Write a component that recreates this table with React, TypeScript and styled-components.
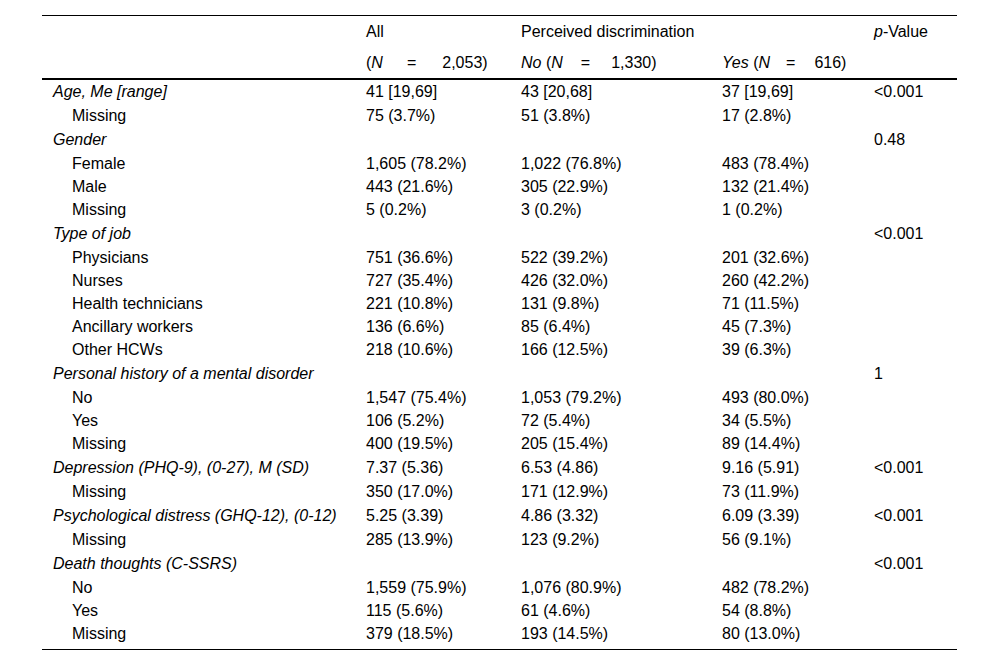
import React from "react";
import styled, { createGlobalStyle } from "styled-components";

const Global = createGlobalStyle`
  html, body { margin: 0; padding: 0; background: #fff; }
  body { font-family: "Liberation Sans", Arial, sans-serif; color: #000; }
`;

const Frame = styled.div`
  margin: 15px 0 0 42px;
  width: 915px;
  border-top: 1px solid #000;
  border-bottom: 1px solid #000;
  padding-bottom: 4px;
`;

const Table = styled.table`
  width: 100%;
  border-collapse: collapse;
  table-layout: fixed;
  font-size: 16px;
`;

const HeadRow = styled.tr<{ $last?: boolean }>`
  height: 31px;
  ${(p) => (p.$last ? "border-bottom: 2px solid #000;" : "")}
`;

const Th = styled.th`
  font-weight: normal;
  text-align: left;
  padding: 0 0 0 11px;
  line-height: 31px;
  white-space: nowrap;
  vertical-align: middle;
`;

const Row = styled.tr<{ $group?: boolean }>`
  height: ${(p) => (p.$group ? 25 : 23)}px;
`;

const Td = styled.td<{ $indent?: boolean; $italic?: boolean }>`
  padding: 0 0 0 ${(p) => (p.$indent ? 30 : 11)}px;
  font-style: ${(p) => (p.$italic ? "italic" : "normal")};
  white-space: nowrap;
  vertical-align: middle;
  line-height: 18px;
`;

const I = styled.i`
  font-style: italic;
`;

const Eq = styled.span<{ $l: number; $r: number }>`
  display: inline-block;
  padding: 0 ${(p) => p.$r}px 0 ${(p) => p.$l}px;
`;

type R = { label: string; group?: boolean; vals: string[]; p?: string };

const rows: R[] = [
  { label: "Age, Me [range]", group: true, vals: ["41 [19,69]", "43 [20,68]", "37 [19,69]"], p: "<0.001" },
  { label: "Missing", vals: ["75 (3.7%)", "51 (3.8%)", "17 (2.8%)"] },
  { label: "Gender", group: true, vals: ["", "", ""], p: "0.48" },
  { label: "Female", vals: ["1,605 (78.2%)", "1,022 (76.8%)", "483 (78.4%)"] },
  { label: "Male", vals: ["443 (21.6%)", "305 (22.9%)", "132 (21.4%)"] },
  { label: "Missing", vals: ["5 (0.2%)", "3 (0.2%)", "1 (0.2%)"] },
  { label: "Type of job", group: true, vals: ["", "", ""], p: "<0.001" },
  { label: "Physicians", vals: ["751 (36.6%)", "522 (39.2%)", "201 (32.6%)"] },
  { label: "Nurses", vals: ["727 (35.4%)", "426 (32.0%)", "260 (42.2%)"] },
  { label: "Health technicians", vals: ["221 (10.8%)", "131 (9.8%)", "71 (11.5%)"] },
  { label: "Ancillary workers", vals: ["136 (6.6%)", "85 (6.4%)", "45 (7.3%)"] },
  { label: "Other HCWs", vals: ["218 (10.6%)", "166 (12.5%)", "39 (6.3%)"] },
  { label: "Personal history of a mental disorder", group: true, vals: ["", "", ""], p: "1" },
  { label: "No", vals: ["1,547 (75.4%)", "1,053 (79.2%)", "493 (80.0%)"] },
  { label: "Yes", vals: ["106 (5.2%)", "72 (5.4%)", "34 (5.5%)"] },
  { label: "Missing", vals: ["400 (19.5%)", "205 (15.4%)", "89 (14.4%)"] },
  { label: "Depression (PHQ-9), (0-27), M (SD)", group: true, vals: ["7.37 (5.36)", "6.53 (4.86)", "9.16 (5.91)"], p: "<0.001" },
  { label: "Missing", vals: ["350 (17.0%)", "171 (12.9%)", "73 (11.9%)"] },
  { label: "Psychological distress (GHQ-12), (0-12)", group: true, vals: ["5.25 (3.39)", "4.86 (3.32)", "6.09 (3.39)"], p: "<0.001" },
  { label: "Missing", vals: ["285 (13.9%)", "123 (9.2%)", "56 (9.1%)"] },
  { label: "Death thoughts (C-SSRS)", group: true, vals: ["", "", ""], p: "<0.001" },
  { label: "No", vals: ["1,559 (75.9%)", "1,076 (80.9%)", "482 (78.2%)"] },
  { label: "Yes", vals: ["115 (5.6%)", "61 (4.6%)", "54 (8.8%)"] },
  { label: "Missing", vals: ["379 (18.5%)", "193 (14.5%)", "80 (13.0%)"] },
];

export default function App() {
  return (
    <>
      <Global />
      <Frame>
        <Table>
          <colgroup>
            <col style={{ width: 313 }} />
            <col style={{ width: 155 }} />
            <col style={{ width: 201 }} />
            <col style={{ width: 152 }} />
            <col style={{ width: 94 }} />
          </colgroup>
          <thead>
            <HeadRow>
              <Th />
              <Th>All</Th>
              <Th colSpan={2}>Perceived discrimination</Th>
              <Th>
                <I>p</I>-Value
              </Th>
            </HeadRow>
            <HeadRow $last>
              <Th />
              <Th>
                (<I>N</I>
                <Eq $l={24} $r={26}>=</Eq>2,053)
              </Th>
              <Th>
                <I>No</I> (<I>N</I>
                <Eq $l={18} $r={21}>=</Eq>1,330)
              </Th>
              <Th>
                <I>Yes</I> (<I>N</I>
                <Eq $l={16} $r={19}>=</Eq>616)
              </Th>
              <Th />
            </HeadRow>
          </thead>
          <tbody>
            {rows.map((r, i) => (
              <Row key={i} $group={r.group}>
                <Td $italic={r.group} $indent={!r.group}>
                  {r.label}
                </Td>
                {r.vals.map((v, j) => (
                  <Td key={j}>{v}</Td>
                ))}
                <Td>{r.p ?? ""}</Td>
              </Row>
            ))}
          </tbody>
        </Table>
      </Frame>
    </>
  );
}
